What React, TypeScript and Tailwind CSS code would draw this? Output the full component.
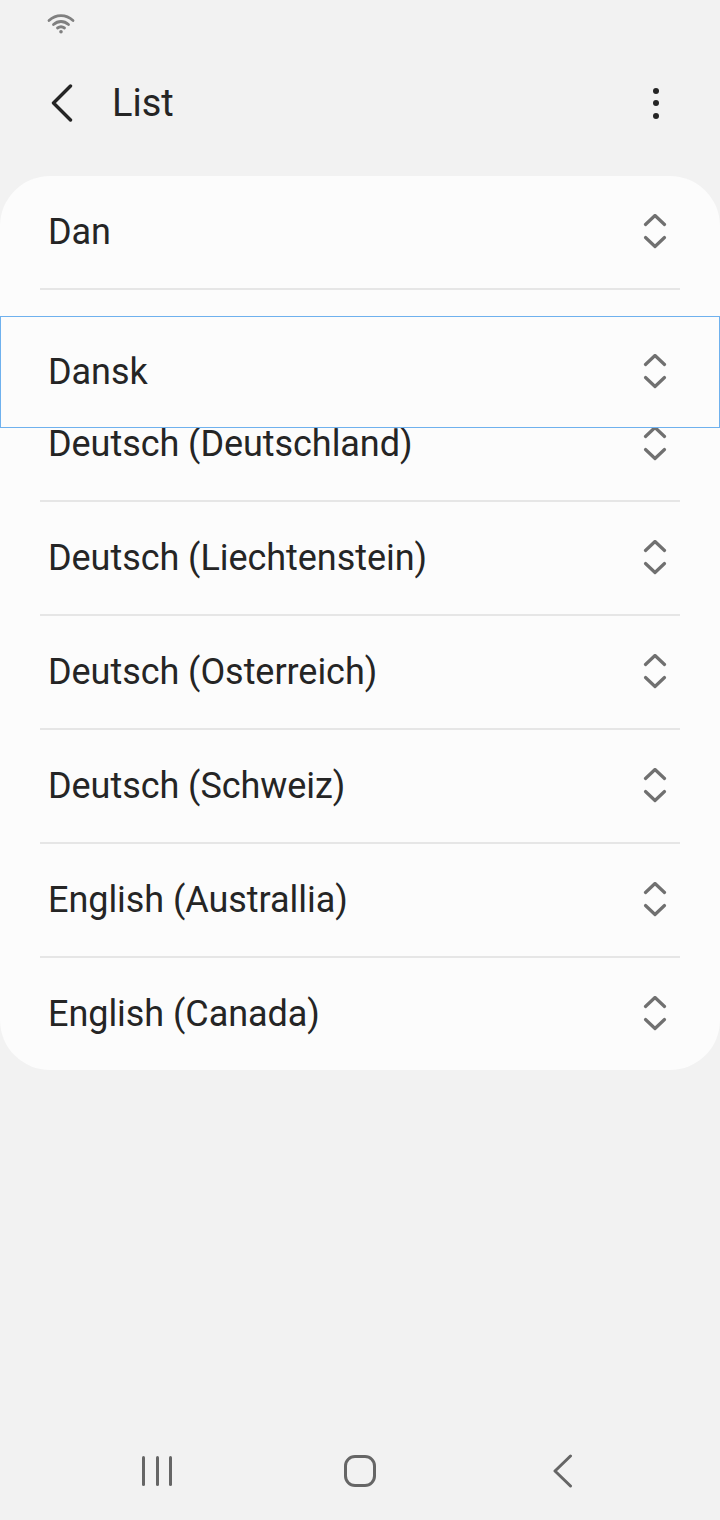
import React from "react";

const rowsBelow = [
  "Deutsch (Deutschland)",
  "Deutsch (Liechtenstein)",
  "Deutsch (Osterreich)",
  "Deutsch (Schweiz)",
  "English (Australlia)",
  "English (Canada)",
];

const UpDownIcon: React.FC = () => (
  <svg width="26" height="36" viewBox="0 1 26 36" fill="none" stroke="#707070" strokeWidth="3.2" strokeLinecap="round" strokeLinejoin="round">
    <path d="M3.5 11.5 L13 2.5 L22.5 11.5" />
    <path d="M3.5 24.5 L13 33.5 L22.5 24.5" />
  </svg>
);

const Row: React.FC<{ label: string; last?: boolean }> = ({ label, last }) => (
  <div className={`px-10 flex flex-col ${last ? "h-[112px]" : "h-[114px]"}`}>
    <div className="flex-1 flex items-center justify-between pl-[8px] pr-[12px]">
      <span className="text-[36px] leading-none tracking-[-0.05px] text-[#252525]">{label}</span>
      <UpDownIcon />
    </div>
    {!last && <div className="h-[2px] bg-[#e6e6e6]" />}
  </div>
);

const App: React.FC = () => {
  return (
    <div className="w-[720px] h-[1520px] bg-[#f2f2f2] flex flex-col font-['Roboto',sans-serif] overflow-hidden">
      {/* Status bar */}
      <div className="h-[48px] pl-[47px] pt-[13px]">
        <svg width="28" height="21" viewBox="0 0 28 21" fill="none" stroke="#808080" strokeWidth="2.8" strokeLinecap="round">
          <path d="M2 7.5 C9 1 19 1 26 7.5" />
          <path d="M6.5 11.5 C11 7.5 17 7.5 21.5 11.5" />
          <path d="M10.5 15 C12.7 13.4 15.3 13.4 17.5 15" />
          <circle cx="14" cy="18.8" r="1.8" fill="#808080" stroke="none" />
        </svg>
      </div>

      {/* Header */}
      <div className="h-[128px] pb-[18px] flex items-center pl-[51px] pr-[61px]">
        <svg width="22" height="38" viewBox="0 0 22 38" fill="none" stroke="#252525" strokeWidth="3.4" strokeLinecap="round" strokeLinejoin="round">
          <path d="M19.5 2 L2.5 19 L19.5 36" />
        </svg>
        <span className="ml-[39px] text-[38px] leading-none text-[#252525]">List</span>
        <div className="ml-auto flex flex-col gap-[6.5px]">
          <span className="w-[6px] h-[6px] rounded-full bg-[#252525]" />
          <span className="w-[6px] h-[6px] rounded-full bg-[#252525]" />
          <span className="w-[6px] h-[6px] rounded-full bg-[#252525]" />
        </div>
      </div>

      {/* List card */}
      <div className="relative h-[894px] bg-[#fcfcfc] rounded-[50px]">
        <Row label="Dan" />
        <div className="h-[98px]" />
        {rowsBelow.map((label, i) => (
          <Row key={label} label={label} last={i === rowsBelow.length - 1} />
        ))}

        {/* Row being dragged */}
        <div className="absolute left-0 right-0 top-[140px] h-[112px] bg-[#fcfcfc] border border-[#6fb1ee] flex items-center justify-between pl-[47px] pr-[51px]">
          <span className="text-[36px] leading-none tracking-[-0.05px] text-[#252525]">Dansk</span>
          <UpDownIcon />
        </div>
      </div>

      {/* Navigation bar */}
      <div className="mt-auto h-[98px] flex items-center">
        <div className="w-[316px] flex justify-center gap-[10.5px] pr-[2px]">
          <span className="w-[3px] h-[30px] rounded-full bg-[#666666]" />
          <span className="w-[3px] h-[30px] rounded-full bg-[#666666]" />
          <span className="w-[3px] h-[30px] rounded-full bg-[#666666]" />
        </div>
        <div className="ml-[28px] w-[32px] h-[32px] rounded-[11px] border-[3px] border-[#666666]" />
        <svg className="ml-[176px]" width="22" height="34" viewBox="0 0 22 34" fill="none" stroke="#666666" strokeWidth="3" strokeLinecap="round" strokeLinejoin="round">
          <path d="M18.5 2 L3 17 L18.5 32" />
        </svg>
      </div>
    </div>
  );
};

export default App;
